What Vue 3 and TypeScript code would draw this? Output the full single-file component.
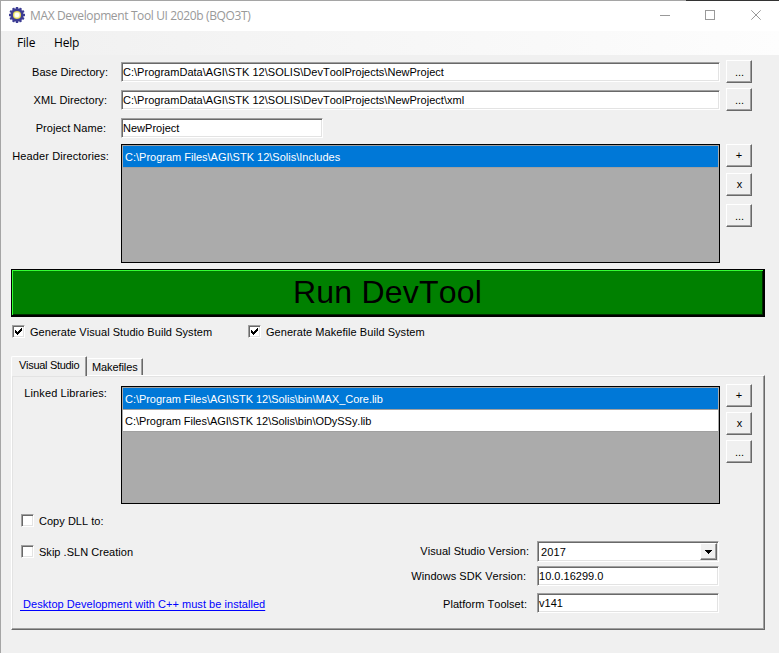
<script setup lang="ts">
import { ref } from 'vue'

interface Check { label: string; on: boolean }

const headerDirs = ref<string[]>(['C:\\Program Files\\AGI\\STK 12\\Solis\\Includes'])
const libraries = ref<string[]>([
  'C:\\Program Files\\AGI\\STK 12\\Solis\\bin\\MAX_Core.lib',
  'C:\\Program Files\\AGI\\STK 12\\Solis\\bin\\ODySSy.lib',
])
const targets = ref<Check[]>([
  { label: 'Generate Visual Studio Build System', on: true },
  { label: 'Generate Makefile Build System', on: true },
])
const options = ref<Check[]>([
  { label: 'Copy DLL to:', on: false },
  { label: 'Skip .SLN Creation', on: false },
])
const teeth = Array.from({ length: 12 }, (_, i) => i * 30)
</script>

<template>
  <div class="window">
    <header class="titlebar">
      <svg class="gear" width="16" height="16" viewBox="0 0 16 16">
        <rect v-for="a in teeth" :key="a" x="6.8" y="0" width="2.4" height="3" fill="#3d3d94" :transform="`rotate(${a} 8 8)`" />
        <circle cx="8" cy="8" r="5.4" fill="#d8cc48" stroke="#3d3d94" stroke-width="2.6" />
        <circle cx="8" cy="8" r="3.3" fill="#f3ee9c" />
        <circle cx="8" cy="8" r="2.3" fill="#fffffa" />
      </svg>
      <span class="title">MAX Development Tool UI 2020b (BQO3T)</span>
      <svg class="controls" width="104" height="12" viewBox="0 0 104 12" fill="none" stroke="#999">
        <path d="M0 6.5H10" />
        <rect x="45.5" y="1.5" width="9" height="9" />
        <path d="M91.3 1.3L100.7 10.7M100.7 1.3L91.3 10.7" />
      </svg>
    </header>
    <nav class="menu"><span class="file">File</span><span>Help</span></nav>

    <main class="content">
      <section class="form">
        <div class="row">
          <label class="base">Base Directory:</label>
          <div class="field wide">C:\ProgramData\AGI\STK 12\SOLIS\DevToolProjects\NewProject</div>
          <button class="btn dots">...</button>
        </div>
        <div class="row">
          <label class="xml">XML Directory:</label>
          <div class="field wide">C:\ProgramData\AGI\STK 12\SOLIS\DevToolProjects\NewProject\xml</div>
          <button class="btn dots">...</button>
        </div>
        <div class="row">
          <label class="project">Project Name:</label>
          <div class="field short">NewProject</div>
        </div>
        <div class="row list-row">
          <label class="headers">Header Directories:</label>
          <div class="list">
            <div v-for="(d, i) in headerDirs" :key="d" class="item" :class="{ selected: i === 0 }">{{ d }}</div>
          </div>
          <div class="stack spaced">
            <button class="btn plus">+</button>
            <button class="btn cross">x</button>
            <button class="btn dots">...</button>
          </div>
        </div>
      </section>

      <button class="run">Run DevTool</button>

      <div class="targets">
        <div v-for="c in targets" :key="c.label" class="check">
          <span class="box"><svg v-if="c.on" width="7" height="7" viewBox="0 0 7 7" shape-rendering="crispEdges"><path d="M0 2H1V3H2V4H3V3H4V2H5V1H6V0H7V3H6V4H5V5H4V6H3V7H2V6H1V5H0Z" fill="#000" /></svg></span>
          <span>{{ c.label }}</span>
        </div>
      </div>

      <div class="tabs">
        <div class="tab active">Visual Studio</div>
        <div class="tab">Makefiles</div>
      </div>
      <section class="panel">
        <div class="row list-row linked">
          <label class="libs">Linked Libraries:</label>
          <div class="list">
            <div v-for="(d, i) in libraries" :key="d" class="item" :class="{ selected: i === 0 }">{{ d }}</div>
          </div>
          <div class="stack">
            <button class="btn plus">+</button>
            <button class="btn cross">x</button>
            <button class="btn dots">...</button>
          </div>
        </div>
        <div class="lower">
          <div class="left">
            <div v-for="c in options" :key="c.label" class="check option">
              <span class="box"></span>
              <span>{{ c.label }}</span>
            </div>
            <a class="link">&nbsp;Desktop Development with C++ must be installed</a>
          </div>
          <div class="versions">
            <div class="row">
              <label class="vs">Visual Studio Version:</label>
              <div class="field combo">
                <span>2017</span>
                <span class="arrow"><svg width="7" height="4" viewBox="0 0 7 4" shape-rendering="crispEdges"><path d="M0 0H7V1H6V2H5V3H4V4H3V3H2V2H1V1H0Z" fill="#000" /></svg></span>
              </div>
            </div>
            <div class="row">
              <label class="sdk">Windows SDK Version:</label>
              <div class="field">10.0.16299.0</div>
            </div>
            <div class="row toolset">
              <label class="plat">Platform Toolset:</label>
              <div class="field">v141</div>
            </div>
          </div>
        </div>
      </section>
    </main>
  </div>
</template>

<style>
body {
  margin: 0;
  overflow: hidden;
}
</style>

<style scoped>
* {
  box-sizing: border-box;
}
.window {
  width: 779px;
  height: 653px;
  border-top: 1px solid #a5a5a5;
  border-left: 1px solid #a5a5a5;
  border-image: linear-gradient(90deg, #a5a5a5 88%, #333 88%) 1;
  border-right: 0;
  border-bottom: 0;
  background: #f0f0f0;
  color: #000;
  font: 11px/13px "Liberation Sans", Arial, sans-serif;
  font-kerning: none;
  white-space: nowrap;
}
.titlebar {
  display: flex;
  align-items: center;
  height: 30px;
  padding: 0 15px 0 8px;
  background: #fff;
}
.gear {
  margin-top: -2px;
}
.title {
  flex: 1;
  margin-left: 5px;
  color: #999;
  font: 12px/16px "Open Sans", sans-serif;
  letter-spacing: -0.37px;
}
.controls {
  margin: -2px 0 0;
}
.menu {
  display: flex;
  height: 24px;
  padding: 4px 16px;
  background: linear-gradient(90deg, #f0f0f0, #fdfdfd);
  font: 12px/16px "Open Sans", sans-serif;
  letter-spacing: -0.2px;
}
.file {
  width: 37px;
}
.content {
  padding: 5px 0 0 10px;
}
.row {
  display: flex;
  align-items: flex-start;
}
.form .row {
  height: 28px;
}
.form .list-row {
  height: 125px;
}
.row > label {
  flex: none;
  width: 110px;
  padding-top: 6px;
  text-align: right;
  letter-spacing: 0.05px;
}
.row > .base { padding-right: 13px; }
.row > .xml { padding-right: 14px; }
.row > .project { padding-right: 15px; }
.row > .headers { padding: 6px 12px 0 0; letter-spacing: 0.1px; }
.row > .libs { width: 109px; padding: 3px 14px 0 0; letter-spacing: 0.12px; }
.field {
  flex: none;
  width: 182px;
  height: 20px;
  padding: 3px 1px 0;
  border: 1px solid;
  border-color: #a0a0a0 #fff #fff #a0a0a0;
  background: #fff;
  box-shadow: inset 1px 1px #696969, inset -1px -1px #e3e3e3;
  letter-spacing: 0.02px;
}
.form .field {
  margin-top: 2px;
}
.form .wide { width: 599px; }
.form .short { width: 202px; }
.btn {
  flex: none;
  width: 26px;
  height: 23px;
  margin: 0;
  padding: 1px 0 0;
  border: 1px solid;
  border-color: #fff #696969 #696969 #fff;
  border-radius: 0;
  background: #f0f0f0;
  box-shadow: inset -1px -1px #a0a0a0;
  color: #000;
  font: inherit;
}
.cross { padding: 0 0 0 1px; }
.plus { padding-top: 0; }
.dots { padding: 1px 0 0 1px; }
.row > .btn,
.stack { margin-left: 6px; }
.stack {
  display: flex;
  flex-direction: column;
  gap: 5px;
}
.spaced { gap: 6px; }
.spaced .dots { margin-top: 2px; }
.list {
  flex: none;
  width: 599px;
  height: 119px;
  padding: 1px;
  border: 1px solid #000;
  background: #ababab;
  box-shadow: inset 0 1px #a0a0a0;
}
.item {
  height: 22px;
  padding: 5px 2px 0;
  border-bottom: 1px solid #a0a0a0;
  background: #fff;
}
.linked .item {
  letter-spacing: -0.04px;
}
.selected {
  background: #0078d7;
  color: #fff;
}
.run {
  display: block;
  width: 754px;
  height: 48px;
  padding: 0 0 2px;
  border: solid #000;
  border-width: 1px 2px 2px 1px;
  border-radius: 0;
  background: #008000;
  box-shadow: inset 1px 1px #3f3, inset -1px -1px #002c00;
  color: #000;
  font: 32px/40px "Liberation Sans", Arial, sans-serif;
  font-kerning: none;
  letter-spacing: 0.2px;
}
.targets {
  display: flex;
  padding: 8px 0 0 1px;
  letter-spacing: 0.05px;
}
.check {
  display: flex;
  width: 236px;
  height: 14px;
  gap: 5px;
}
.check > span:last-child {
  padding-top: 1px;
}
.box {
  width: 13px;
  height: 13px;
  padding: 2px;
  border: 1px solid;
  border-color: #a0a0a0 #fff #fff #a0a0a0;
  background: #fff;
  box-shadow: inset 1px 1px #696969, inset -1px -1px #e3e3e3;
}
.box svg {
  display: block;
}
.tabs {
  display: flex;
  align-items: flex-end;
  height: 36px;
  padding-left: 1px;
}
.tab {
  width: 56px;
  height: 17px;
  padding: 2px 0 0 5px;
  border-top: 1px solid #fff;
  border-right: 1px solid #696969;
  border-radius: 2px 1px 0 0;
  box-shadow: inset -1px 0 #a0a0a0;
  letter-spacing: -0.1px;
}
.active {
  z-index: 1;
  position: relative;
  width: 76px;
  height: 20px;
  margin: 0 0 -1px -1px;
  padding: 2px 0 0 7px;
  border-left: 1px solid #fff;
  background: #f0f0f0;
  letter-spacing: -0.3px;
}
.panel {
  width: 754px;
  height: 255px;
  padding-top: 8px;
  border: 1px solid;
  border-color: #fff #696969 #696969 #fff;
  box-shadow: inset -1px -1px #a0a0a0, inset 1px 1px #e3e3e3;
}
.linked .list {
  height: 118px;
  margin-top: 2px;
}
.lower {
  display: flex;
  padding: 10px 0 0 8px;
}
.left {
  width: 357px;
  margin-left: 1px;
}
.option {
  height: 31px;
  letter-spacing: 0.03px;
}
.link {
  display: inline-block;
  margin: 22px 0 0 -1px;
  color: #00f;
  text-decoration: underline;
  text-underline-offset: 2px;
  letter-spacing: 0.04px;
}
.versions {
  padding-top: 27px;
}
.versions .row {
  height: 25px;
}
.versions .row > label {
  width: 159px;
  padding-top: 4px;
}
.versions .row > .vs { padding-right: 8px; }
.versions .row > .sdk { padding-right: 11px; }
.versions .row > .plat { padding: 5px 10px 0 0; }
.versions .toolset { margin-top: 2px; }
.versions .combo {
  display: flex;
  justify-content: space-between;
  height: 21px;
  padding: 1px;
}
.combo > span:first-child {
  padding: 3px 0 0 2px;
  letter-spacing: 0.15px;
}
.arrow {
  display: flex;
  align-items: center;
  justify-content: center;
  width: 17px;
  height: 17px;
  border: 1px solid;
  border-color: #fff #696969 #696969 #fff;
  background: #f0f0f0;
  box-shadow: inset -1px -1px #a0a0a0;
}
</style>
